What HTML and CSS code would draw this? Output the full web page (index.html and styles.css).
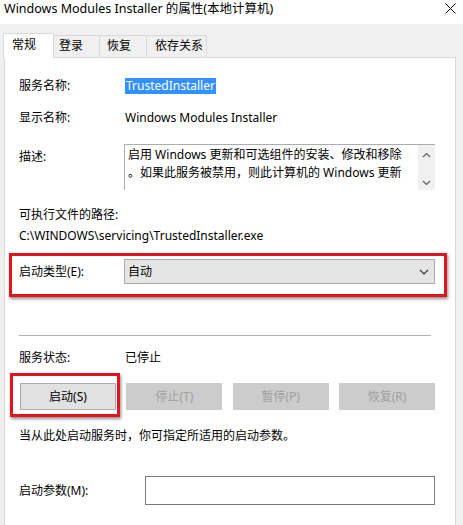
FILE: index.html
```html
<!DOCTYPE html>
<html lang="zh-CN">
<head>
<meta charset="utf-8">
<title>Windows Modules Installer 的属性(本地计算机)</title>
<link rel="stylesheet" href="styles.css">
</head>
<body>
<div class="titlebar">
  <span class="title">Windows Modules Installer 的属性(本地计算机)</span>
  <svg class="close" width="11" height="11" viewBox="0 0 11 11"><path d="M0.5 0.5L10.5 10.5M10.5 0.5L0.5 10.5" stroke="#000" stroke-width="1" fill="none"/></svg>
</div>
<div class="tabs">
  <div class="tab active">常规</div>
  <div class="tab">登录</div>
  <div class="tab">恢复</div>
  <div class="tab">依存关系</div>
</div>
<div class="panel">
  <div class="row r-name">
    <span class="label">服务名称:</span>
    <span class="selected">TrustedInstaller</span>
  </div>
  <div class="row r-display">
    <span class="label">显示名称:</span>
    <span class="value">Windows Modules Installer</span>
  </div>
  <div class="row r-desc">
    <span class="label desc-label">描述:</span>
    <div class="desc-box">
      <div class="desc-text">
        <div class="line">启用 Windows 更新和可选组件的安装、修改和移除</div>
        <div class="line">。如果此服务被禁用，则此计算机的 Windows 更新</div>
      </div>
      <div class="scrollbar">
        <svg width="9" height="6" viewBox="0 0 9 6"><path d="M1 5L4.5 1.5L8 5" stroke="#606060" stroke-width="1.2" fill="none"/></svg>
        <svg width="9" height="6" viewBox="0 0 9 6"><path d="M1 1L4.5 4.5L8 1" stroke="#606060" stroke-width="1.2" fill="none"/></svg>
      </div>
    </div>
  </div>
  <div class="row r-pathlabel">可执行文件的路径:</div>
  <div class="row r-path">C:\WINDOWS\servicing\TrustedInstaller.exe</div>
  <div class="row r-startup">
    <span class="label">启动类型(E):</span>
    <div class="combo">
      <span>自动</span>
      <svg width="10" height="6" viewBox="0 0 10 6"><path d="M1 1L5 5L9 1" stroke="#333" stroke-width="1.1" fill="none"/></svg>
    </div>
    <div class="mark mark-startup"></div>
  </div>
  <div class="separator"></div>
  <div class="row r-status">
    <span class="label">服务状态:</span>
    <span class="value">已停止</span>
  </div>
  <div class="buttons">
    <div class="btn-wrap">
      <button class="btn">启动(S)</button>
      <div class="mark mark-start"></div>
    </div>
    <button class="btn disabled">停止(T)</button>
    <button class="btn disabled">暂停(P)</button>
    <button class="btn disabled">恢复(R)</button>
  </div>
  <div class="row r-hint">当从此处启动服务时，你可指定所适用的启动参数。</div>
  <div class="row r-param">
    <span class="label param-label">启动参数(M):</span>
    <div class="input"></div>
  </div>
</div>
</body>
</html>
```
FILE: styles.css
```css
* { box-sizing: border-box; }

body {
  margin: 0;
  width: 463px;
  height: 525px;
  overflow: hidden;
  background: #f0f0f0;
  color: #000;
  font-family: "Noto Sans", "Noto Sans CJK SC", sans-serif;
  font-size: 12px;
  line-height: 16px;
}

.titlebar {
  height: 24px;
  background: #fff;
  display: flex;
  justify-content: space-between;
  align-items: flex-start;
  padding: 1px 7px 0 4px;
}

.title {
  font-size: 12.5px;
  line-height: 16px;
}

.close {
  margin-top: 2px;
}

.tabs {
  display: flex;
  align-items: flex-end;
  height: 24px;
  margin: 9px 0 0 3px;
  position: relative;
  z-index: 1;
}

.tab {
  height: 22px;
  line-height: 20px;
  padding-left: 5px;
  border: 1px solid #d9d9d9;
  border-bottom: none;
  background: #f0f0f0;
  margin-left: -1px;
}

.tab:nth-child(1) { width: 51px; margin-left: 0; }
.tab:nth-child(2) { width: 47px; }
.tab:nth-child(3) { width: 48px; padding-left: 7px; }
.tab:nth-child(4) { width: 61px; padding-left: 8px; }

.tab.active {
  height: 25px;
  line-height: 22px;
  padding-left: 8px;
  background: #fff;
  margin-bottom: -1px;
}

.panel {
  margin-left: 4px;
  width: 452px;
  height: 480px;
  background: #fff;
  border: 1px solid #d9d9d9;
  padding: 0 20px 0 14px;
}

.row {
  display: flex;
  align-items: center;
  white-space: nowrap;
}

.label {
  width: 105px;
  flex: none;
}

.value {
  padding-left: 1px;
}

.r-name {
  margin-top: 18px;
  height: 20px;
}

.selected {
  background: #3390ff;
  color: #fff;
  height: 16px;
  line-height: 16px;
  padding: 0 1px;
  margin-left: 1px;
}

.r-display {
  margin-top: 12px;
  height: 20px;
}

.r-desc {
  margin-top: 16px;
  align-items: flex-start;
}

.desc-label {
  padding-top: 5px;
}

.desc-box {
  width: 311px;
  height: 46px;
  display: flex;
  border-top: 1px solid #abadb3;
  border-left: 1px solid #abadb3;
}

.desc-text {
  flex: 1;
  padding: 1px 0 0 3px;
  line-height: 18px;
  overflow: hidden;
}

.scrollbar {
  width: 17px;
  background: #f0f0f0;
  display: flex;
  flex-direction: column;
  justify-content: space-between;
  align-items: center;
  padding: 7px 0 4px;
}

.r-pathlabel {
  margin-top: 17px;
  height: 16px;
}

.r-path {
  margin-top: 5px;
  height: 16px;
}

.r-startup {
  margin-top: 15px;
  height: 25px;
  position: relative;
}

.combo {
  flex: 1;
  height: 25px;
  background: #e5e5e5;
  border: 1px solid #adadad;
  display: flex;
  align-items: center;
  justify-content: space-between;
  padding: 0 5px 0 3px;
}

.mark {
  position: absolute;
  border: 3px solid #e2141c;
  box-shadow: 1px 2px 3px rgba(0, 0, 0, 0.45);
  pointer-events: none;
}

.mark-startup {
  top: -6px;
  left: -10px;
  right: -12px;
  bottom: -13px;
}

.separator {
  margin-top: 51px;
  width: 412px;
  height: 1px;
  background: #b0b0b0;
}

.r-status {
  margin-top: 14px;
  height: 16px;
}

.buttons {
  margin-top: 17px;
  padding-left: 1px;
  display: flex;
  justify-content: space-between;
  height: 27px;
}

.btn-wrap {
  position: relative;
}

.btn {
  width: 96px;
  height: 27px;
  margin: 0;
  padding: 0;
  font: inherit;
  background: #e1e1e1;
  border: 1px solid #adadad;
  color: #000;
}

.btn.disabled {
  background: #cccccc;
  border-color: #cccccc;
  color: #a0a0a0;
}

.mark-start {
  top: -10px;
  left: -10px;
  right: -4px;
  bottom: -7px;
}

.r-hint {
  margin-top: 18px;
  height: 16px;
}

.r-param {
  margin-top: 32px;
}

.param-label {
  width: 126px;
}

.input {
  flex: 1;
  height: 29px;
  border: 1px solid #7a7a7a;
  background: #fff;
}
```
